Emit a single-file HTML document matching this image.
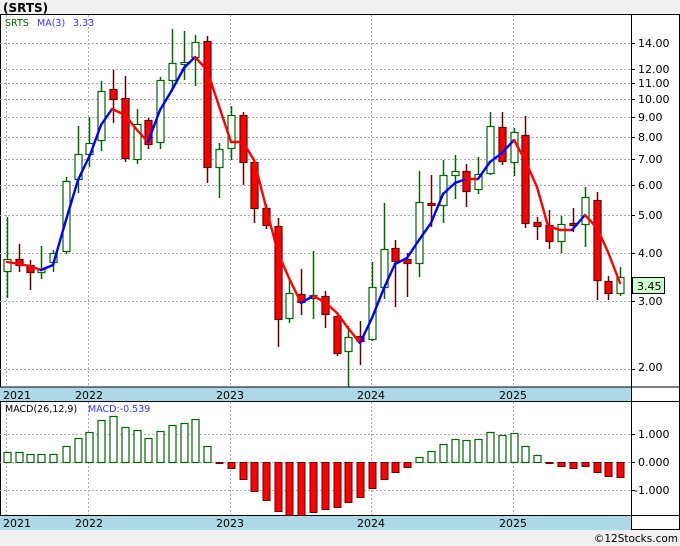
<!DOCTYPE html>
<html><head><meta charset="utf-8"><style>
body{margin:0;width:680px;height:546px;background:#f0f0f0;overflow:hidden;font-family:"DejaVu Sans",sans-serif}
svg{position:absolute;left:0;top:0}
</style></head><body>
<svg id="s" width="680" height="546" xmlns="http://www.w3.org/2000/svg" font-family="DejaVu Sans, sans-serif">
<rect x="0" y="0" width="680" height="546" fill="#f0f0f0"/>
<text x="3" y="12" font-size="12" font-weight="bold" fill="#000">(SRTS)</text>
<rect x="0.5" y="14.5" width="679" height="515" fill="#fff" stroke="#000"/>
<g id="grid" stroke="#aaa" stroke-dasharray="2,2" stroke-width="1"></g>
<rect x="0" y="387" width="631" height="14" fill="#add8e6"/>
<rect x="0" y="515" width="631" height="15" fill="#add8e6"/>
<line x1="0" y1="387" x2="680" y2="387" stroke="#000"/>
<line x1="0" y1="401.5" x2="680" y2="401.5" stroke="#000"/>
<line x1="0" y1="515.5" x2="680" y2="515.5" stroke="#000"/>
<line x1="631.5" y1="15" x2="631.5" y2="530" stroke="#000"/>
<g id="ticks" stroke="#000"></g>
<g id="c"></g>
<g font-size="11" fill="#000">
<text x="638" y="47">14.00</text><text x="638" y="73">12.00</text><text x="638" y="87">11.00</text><text x="638" y="103">10.00</text>
<text x="638" y="121">9.00</text><text x="638" y="141">8.00</text><text x="638" y="163">7.00</text><text x="638" y="189">6.00</text>
<text x="638" y="219">5.00</text><text x="638" y="257">4.00</text><text x="638" y="305">3.00</text><text x="638" y="371">2.00</text>
<text x="638" y="438">1.000</text><text x="638" y="466">0.000</text><text x="634" y="494">-1.000</text>
</g>
<rect x="632.5" y="277.5" width="32" height="16" fill="#ccffcc" stroke="#000"/>
<text x="637" y="290" font-size="11" fill="#000">3.45</text>
<g font-size="11" fill="#000">
<text x="3" y="399">2021</text><text x="75" y="399">2022</text><text x="216" y="399">2023</text><text x="357" y="399">2024</text><text x="499" y="399">2025</text>
<text x="3" y="527">2021</text><text x="75" y="527">2022</text><text x="216" y="527">2023</text><text x="357" y="527">2024</text><text x="499" y="527">2025</text>
</g>
<text x="5" y="26" font-size="9.5" fill="#006600">SRTS</text>
<text x="37" y="26" font-size="9.5" fill="#3333ff">MA(3)</text>
<text x="73" y="26" font-size="9.5" fill="#3333ff">3.33</text>
<text x="5" y="412" font-size="9.5" fill="#000">MACD(26,12,9)</text>
<text x="88" y="412" font-size="9.5" fill="#3333ff">MACD:-0.539</text>
<text x="678" y="542" font-size="10.5" fill="#000" text-anchor="end">©12Stocks.com</text>
</svg>
<script>
var NS="http://www.w3.org/2000/svg";
function el(p,t,a){var e=document.createElementNS(NS,t);for(var k in a)e.setAttribute(k,a[k]);p.appendChild(e);return e;}
var g=document.getElementById('grid'),c=document.getElementById('c'),tk=document.getElementById('ticks');
[43,69,83,99,117,137,159,185,215,253,301,369,434,462,490].forEach(function(y){el(g,'line',{x1:0,y1:y+.5,x2:631,y2:y+.5});el(tk,'line',{x1:631,y1:y+.5,x2:635,y2:y+.5});});
[6,88,230,371,513].forEach(function(x){el(g,'line',{x1:x+.5,y1:15,x2:x+.5,y2:387});el(g,'line',{x1:x+.5,y1:402,x2:x+.5,y2:515});});
var C=[[7,259,271,217,298,1],[19,259,265,244,272,0],[30,265,272,260,290,0],[41,269,272,246,279,1],[53,253,262,250,272,1],[66,181,251,177,254,1],[78,154,179,126,193,1],[89,143,154,117,167,1],[101,91,140,81,151,1],[113,89,99,70,123,0],[125,98,158,76,162,0],[137,124,159,109,164,1],[148,120,144,118,149,0],[160,80,142,77,149,1],[172,63,80,29,89,1],[184,62,64,31,80,1],[195,42,57,35,86,1],[207,41,167,36,183,0],[219,149,167,143,198,1],[231,115,148,106,160,1],[243,115,162,112,185,0],[254,162,208,160,223,0],[266,208,225,204,229,0],[278,226,319,218,347,0],[289,293,318,277,323,1],[301,294,302,269,315,0],[313,295,298,251,319,1],[325,296,314,291,328,0],[337,316,353,315,356,0],[348,337,351,326,387,1],[360,336,341,321,365,0],[372,287,339,262,341,1],[384,249,287,203,299,1],[395,248,261,240,307,0],[407,259,263,253,297,0],[419,202,263,171,277,1],[431,203,205,175,227,0],[443,175,205,160,223,1],[455,171,175,155,199,1],[466,171,191,164,207,0],[478,174,189,157,194,1],[490,126,173,112,175,1],[502,127,161,112,165,0],[514,132,162,128,176,1],[525,135,223,116,228,0],[537,222,226,217,240,0],[549,225,241,210,249,0],[561,224,241,216,253,1],[573,223,225,208,232,0],[585,197,224,187,247,1],[597,200,280,192,300,0],[608,281,293,276,300,0],[620,277,293,267,296,1]];
C.forEach(function(d){var col=d[5]?'#006600':'#660000';
el(c,'line',{x1:d[0]+.5,y1:d[3],x2:d[0]+.5,y2:d[4],stroke:col,'stroke-width':1.5});
el(c,'rect',{x:d[0]-3,y:d[1]+.5,width:7,height:Math.max(d[2]-d[1],1.5),fill:d[5]?'#fff':'#ff0000',stroke:col,'stroke-width':1.2});});
var M=[[7,262],[19,264],[30,266],[41,270],[53,265],[66,220],[78,180],[90,155],[101,125],[112,109],[125,115],[137,130],[148,142],[160,110],[172,90],[184,68],[195,57],[207,70],[219,106],[231,142],[243,142],[254,160],[266,207],[278,253],[289,278],[301,303],[313,296],[325,302],[337,313],[348,328],[360,343],[372,318],[384,288],[395,264],[407,258],[419,240],[431,223],[443,194],[455,183],[466,179],[478,179],[490,162],[502,153],[514,140],[525,160],[537,187],[548,226],[560,230],[572,230],[585,215],[597,228],[608,252],[620,283]];
for(var i=1;i<M.length;i++){el(c,'line',{x1:M[i-1][0],y1:M[i-1][1],x2:M[i][0],y2:M[i][1],stroke:M[i][1]>=M[i-1][1]?'#ff0000':'#0000ff','stroke-width':2.4,'stroke-linecap':'round'});}
var H=[452,452,454,454,454,446,438,432,420,416,427,430,438,431,425,423,419,446,463,468,479,491,500,511,515,515,512,509,507,502,497,488,479,472,467,457,451,444,439,440,439,432,435,433,446,455,463,466,468,466,472,476,477];
H.forEach(function(y,i){var x=C[i][0];var z=462;
if(y<z)el(c,'rect',{x:x-3,y:y+.5,width:7,height:z-y,fill:'#fff',stroke:'#006600','stroke-width':1.2});
else el(c,'rect',{x:x-3,y:z+.5,width:7,height:Math.max(y-z,1),fill:'#ff0000',stroke:'#660000','stroke-width':1});});
</script>
</body></html>
